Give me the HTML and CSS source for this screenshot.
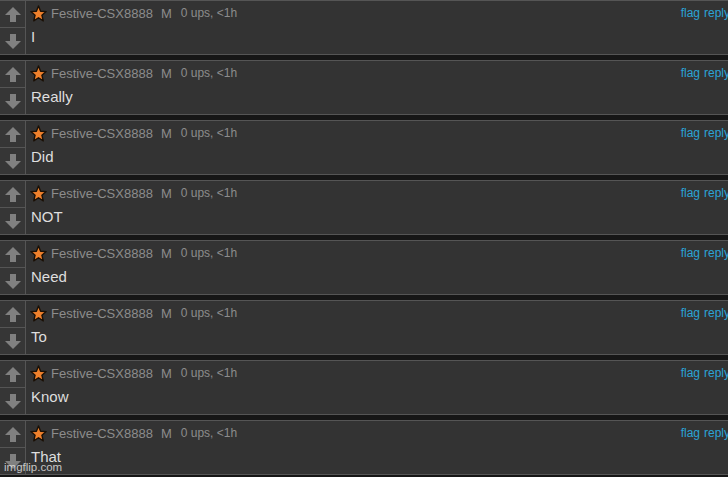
FILE: index.html
```html
<!DOCTYPE html>
<html>
<head>
<meta charset="utf-8">
<link rel="stylesheet" href="styles.css">
</head>
<body>
<div class="page">
  <div class="list" id="list"></div>
</div>
<div class="watermark">imgflip.com</div>
<script>
const words = ["I","Really","Did","NOT","Need","To","Know","That"];
const up = '<svg width="16" height="16" viewBox="0 0 16 16"><path d="M8 0 L16 8 L11 8 L11 15 L5 15 L5 8 L0 8 Z" fill="#808080"/></svg>';
const down = '<svg width="16" height="16" viewBox="0 0 16 16"><path d="M5 0 L11 0 L11 7 L16 7 L8 15 L0 7 L5 7 Z" fill="#808080"/></svg>';
const star = '<svg class="star" width="17" height="17" viewBox="0 0 16 16"><path d="M8 0.9 L10 5.9 L15.2 6.2 L11.2 9.6 L12.5 14.9 L8 12 L3.5 14.9 L4.8 9.6 L0.8 6.2 L6 5.9 Z" fill="#f0812c" stroke="#1a1006" stroke-width="1.3" stroke-linejoin="round"/></svg>';
document.getElementById('list').innerHTML = words.map(w => `
  <div class="comment">
    <div class="vote">
      <div class="vote-btn up">${up}</div>
      <div class="vote-btn down">${down}</div>
    </div>
    <div class="main">
      <div class="head">
        ${star}
        <span class="user">Festive-CSX8888</span>
        <span class="m">M</span>
        <span class="ups">0 ups, &lt;1h</span>
        <span class="links"><a>flag</a><a>reply</a></span>
      </div>
      <div class="text">${w}</div>
    </div>
  </div>`).join('');
</script>
</body>
</html>
```

FILE: styles.css
```css
html, body {
  margin: 0;
  padding: 0;
  background: #161616;
  overflow: hidden;
  width: 728px;
  height: 477px;
}
.page {
  width: 736px;
  font-family: "Liberation Sans", Arial, sans-serif;
}
.list {
  display: flex;
  flex-direction: column;
  gap: 5px;
}
.comment {
  display: flex;
  height: 53px;
  background: #333333;
  border-top: 1px solid #555;
  border-bottom: 1px solid #555;
}
.vote {
  width: 25px;
  flex: none;
  display: flex;
  flex-direction: column;
  border-right: 1px solid #555;
  background: #363636;
}
.vote-btn {
  display: flex;
  align-items: center;
  justify-content: center;
}
.vote-btn.up {
  border-bottom: 1px solid #555;
  padding-top: 1px;
  height: 25px;
}
.vote-btn.down {
  padding-top: 2px;
  height: 24px;
}
.main {
  flex: 1;
  padding-left: 5px;
  display: flex;
  flex-direction: column;
}
.head {
  display: flex;
  align-items: center;
  height: 18px;
  margin-top: 3px;
  font-size: 13px;
  color: #8c8c8c;
  white-space: nowrap;
}
.star {
  flex: none;
  margin-left: -1px;
  margin-right: 4px;
}
.user {
  color: #8c8c8c;
}
.m {
  margin-left: 8px;
}
.ups {
  font-size: 12px;
  margin-left: 9px;
}
.links {
  margin-left: auto;
  display: flex;
  gap: 4px;
  margin-right: 6px;
}
.links a {
  color: #2ba3d6;
  font-size: 12px;
}
.text {
  margin-top: 5px;
  font-size: 15px;
  line-height: 20px;
  color: #dedede;
}
.watermark {
  position: absolute;
  left: 4px;
  top: 461px;
  font-family: "Liberation Sans", Arial, sans-serif;
  font-size: 11.5px;
  color: rgba(235, 235, 235, 0.8);
}
```
